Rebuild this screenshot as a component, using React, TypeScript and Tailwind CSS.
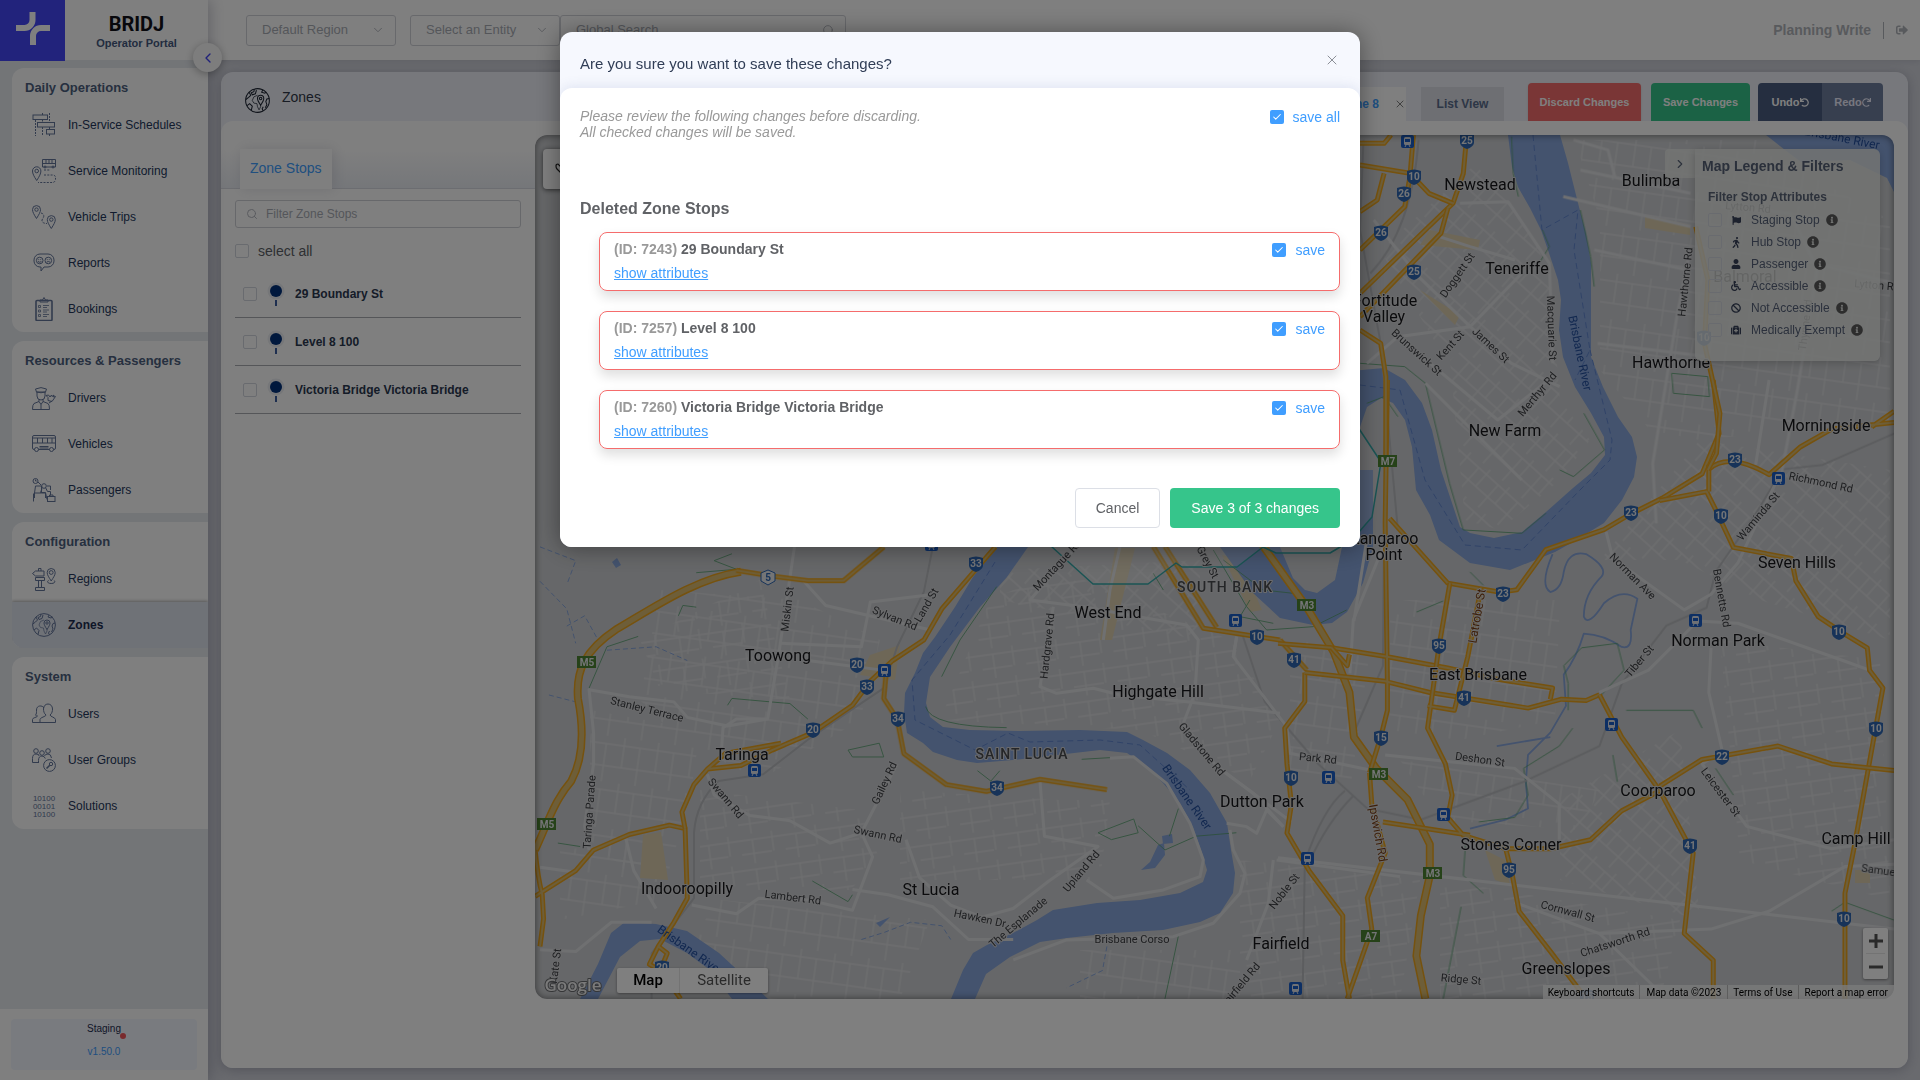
import type { ReactNode } from "react";
import { FaFlag, FaWalking, FaUser, FaWheelchair, FaBan, FaMedkit, FaInfoCircle, FaSignOutAlt, FaUndo, FaRedo } from "react-icons/fa";
import { ChevronDown, ChevronLeft, ChevronRight, Check, Search, X } from "lucide-react";

/* ---------- sidebar icons ---------- */

function Icon({ children, dark = false }: { children: ReactNode; dark?: boolean }) {
  return (
    <svg
      viewBox="0 0 24 24"
      className={dark ? "size-[25px] shrink-0 text-[#1c2433]" : "size-6 shrink-0 text-[#64769b]"}
      fill="none"
      stroke="currentColor"
      strokeWidth="1"
      aria-hidden="true"
    >
      {children}
    </svg>
  );
}

const scheduleIcon = (
  <>
    <rect x="1" y="2" width="14.5" height="4.5" />
    <rect x="5.5" y="9.5" width="17" height="4.5" />
    <rect x="14.5" y="16.5" width="8" height="4.5" />
    <path d="M3.5 7v16M10.5 0v2M10.5 6.5v3M10.5 14v9M17.5 0v9M17.5 14v2M17.5 21v3" strokeDasharray="2 1" />
  </>
);
const monitoringIcon = (
  <>
    <path d="M10.5.5h13v7.500h-13zM10.500 4.500h13M14 .5v4M17 .5v4M20 .5v4" />
    <circle cx="13" cy="8" r="1" />
    <circle cx="21" cy="8" r="1" />
    <path d="M4.700 21.500C2 17.500.5 14.500.5 12a4.200 4.200 0 0 1 8.400 0c0 2.500-1.500 5.500-4.200 9.500z" />
    <circle cx="4.700" cy="12" r="1.800" />
    <path d="M12 11h6M12 16h9a2.500 2.500 0 0 1 2.500 2.500v2a3 3 0 0 1-3 3H6" strokeDasharray="2 1.300" />
  </>
);
const tripsIcon = (
  <>
    <path d="M4.500 13.500C2 9.500.5 7 .5 4.600a4 4 0 0 1 8 0c0 2.400-1.500 4.900-4 8.900z" />
    <circle cx="4.500" cy="4.600" r="1.700" />
    <path d="M19.300 23.500c-2.500-4-4-6.500-4-8.900a4 4 0 0 1 8 0c0 2.400-1.500 4.900-4 8.900z" />
    <circle cx="19.300" cy="14.600" r="1.700" />
    <path d="M9 8c4 1 3 4 1.500 6s0 4.500 4.500 4.500" strokeDasharray="2.500 1.200" />
  </>
);
const reportsIcon = (
  <>
    <path d="M8 3h8a6 6 0 0 1 6 6v1a6 6 0 0 1-6 6h-4l-3 4v-4H8a6 6 0 0 1-6-6V9a6 6 0 0 1 6-6z" />
    <circle cx="7.700" cy="9.500" r="3.300" />
    <circle cx="16.300" cy="9.500" r="3.300" />
    <path d="M6 10.500q1.700 1.500 3.400 0M14.600 11.200q1.700-1.500 3.400 0M6.700 8.300v.8M8.700 8.300v.8M15.300 8.300v.8M17.300 8.300v.8" />
  </>
);
const bookingsIcon = (
  <>
    <rect x="4" y="3.500" width="16" height="20" rx="1" strokeWidth="1.600" />
    <path d="M8 5V3h2.500L12 .5 13.500 3H16v2z" />
    <path d="M6.500 8.500h2v2h-2zM6.500 13h2v2h-2zM6.500 17.500h2v2h-2zM11 8.500h6M11 10.500h4M11 13h6M11 15h4M11 17.500h6M11 19.500h4" strokeWidth="0.800" />
  </>
);
const driverIcon = (
  <>
    <path d="M3.500 3Q9 .2 14.500 3l-1 3h-9zM5 6v4a4 4 0 0 0 8 0V6M4.500 6Q9 7.500 13.500 6" />
    <path d="M7 13.500v2L2 17.500Q.5 18.500.5 23.500h17q0-5-1.500-6l-5-2v-2M7 15.500l2 3 2-3M9 18.500v5M17 17l3-2" />
    <path d="M14 9.500l2 2v3l4 1 3.500-5-2 .5.500-2-2 1.500-.5-1.500-1.500 2-1.500-2z" />
  </>
);
const vehiclesIcon = (
  <>
    <rect x=".5" y="3.500" width="23" height="14" rx="1.500" />
    <path d="M.5 6h23M.5 11h23M5.500 6v5M10.500 6v5M15.500 6v5M20 6v5M7.500 14.500h9M7.500 16h9" />
    <circle cx="4.500" cy="17.500" r="2" fill="#fff" />
    <circle cx="19.500" cy="17.500" r="2" fill="#fff" />
  </>
);
const passengersIcon = (
  <>
    <circle cx="3.500" cy="3" r="2.500" />
    <path d="M3.500 1.500V3h1.200M3.500 8h6v7h-7v5M3.500 8l-1 7M1.500 15.500v8M9.500 15h4v5" />
    <circle cx="12" cy="8" r="2.300" />
    <path d="M10 10.500l-1.500 4h5l1.500 7M13.500 9.500l2 4h3v4M15 8h3.500v4M6 4l3 3" />
    <rect x="15.500" y="18.500" width="7.500" height="5" />
    <path d="M17.500 18.500V17h3.500v1.500" />
  </>
);
const regionsIcon = (
  <>
    <path d="M.5 6.500l3-2.500h8.500v5H3.500zM3.500 10.500h9v3h-9zM6.500 1.500h2.500V4M6.500 1.500V4M6.500 13.500v7M9.500 13.500v7M3.500 20.500h9v3h-9z" />
    <path d="M19.200 14c-2.500-4-4-6-4-8.500a4 4 0 0 1 8 0c0 2.500-1.500 4.500-4 8.500z" />
    <circle cx="19.200" cy="5.500" r="1.900" />
    <path d="M16.500 13.500c-1.500.5-1.500 3 2.700 3s4.200-2.500 2.700-3" />
  </>
);
const zonesIcon = (
  <>
    <circle cx="12" cy="12" r="11.400" />
    <path d="M4 4l1.500 3-2 2L.8 11M9 1l-.5 2.500-2.500 1L7 6.500l3-1 1-3.500M17 2l-1 2 3 1 1.500-1M23.300 10l-2.300.5-1 2.500 1 3-1.500 3M2 17l2.500-2 2.500 2.500-1 4M17.500 22l-1-2 1-2" />
    <path d="M12 7L8.500 8.500 7 12l1.500 2.500 3 .5.500 3 1.500 3 1.500-3V16" strokeWidth="0.700" />
    <path d="M15 16.500c-2-3-3-5-3-6.500a3 3 0 0 1 6 0c0 1.500-1 3.500-3 6.500z" />
    <circle cx="15" cy="10" r="1.200" />
  </>
);
const usersIcon = (
  <>
    <path d="M8 20.500h15.500v-3c0-2-5.500-3-5.500-4.500 2-1.500 2.500-4 2.500-6 0-3-2-5-4.500-5s-4.500 2-4.500 5c0 2 .5 4.500 2.500 6 0 1.500-6 2.500-6 4.500z" />
    <path d="M8 20.500H.5v-3c0-2 4.500-2 5-3.500-1 0-2-.5-2-1 1.200-1 1-3 1-5 0-5 6-5 7.500-2" />
  </>
);
const groupsIcon = (
  <>
    <circle cx="4" cy="3" r="2.300" />
    <circle cx="10" cy="5" r="2.300" />
    <circle cx="16" cy="3" r="2.300" />
    <path d="M.5 14.500v-4Q.5 6 4 6t3 2M6.500 15v-2.500q0-4.500 3.500-4.500 2.500 0 3.300 2.500M.5 14.500h6M12.500 8Q13 6 16 6t3.500 4" />
    <circle cx="17.500" cy="17.500" r="5.900" />
    <circle cx="19" cy="16" r="1.700" />
    <path d="M17.800 17.200L14.500 20.500" strokeWidth="1.600" />
  </>
);
const solutionsIcon = (
  <g fill="currentColor" stroke="none" fontFamily="Liberation Sans" fontSize="8" textAnchor="middle">
    <text x="12" y="7">10100</text>
    <text x="12" y="15">00101</text>
    <text x="12" y="23">10100</text>
  </g>
);

const navGroups: { title: string; items: { label: string; icon: ReactNode; active?: boolean }[] }[] = [
  {
    title: "Daily Operations",
    items: [
      { label: "In-Service Schedules", icon: scheduleIcon },
      { label: "Service Monitoring", icon: monitoringIcon },
      { label: "Vehicle Trips", icon: tripsIcon },
      { label: "Reports", icon: reportsIcon },
      { label: "Bookings", icon: bookingsIcon },
    ],
  },
  {
    title: "Resources & Passengers",
    items: [
      { label: "Drivers", icon: driverIcon },
      { label: "Vehicles", icon: vehiclesIcon },
      { label: "Passengers", icon: passengersIcon },
    ],
  },
  {
    title: "Configuration",
    items: [
      { label: "Regions", icon: regionsIcon },
      { label: "Zones", icon: zonesIcon, active: true },
    ],
  },
  {
    title: "System",
    items: [
      { label: "Users", icon: usersIcon },
      { label: "User Groups", icon: groupsIcon },
      { label: "Solutions", icon: solutionsIcon },
    ],
  },
];

function Sidebar() {
  return (
    <aside className="relative z-10 flex w-52 shrink-0 flex-col bg-[#e6eaef] shadow-[2px_0_14px_rgba(60,60,90,0.3)]">
      <div className="flex h-[60px] shrink-0 bg-white">
        <div className="flex h-[61px] w-[65px] justify-center bg-[#4446f8] pt-3">
          <svg viewBox="0 0 34 33" className="h-[33px] w-[34px]" fill="none" stroke="#fff" strokeWidth="6" aria-hidden="true">
            <path d="M0 16h8.500a8 8 0 0 0 8-8V0M34 16h-9a8 8 0 0 0-8 8v9" />
          </svg>
        </div>
        <div className="flex flex-1 flex-col items-center pt-3">
          <div className="font-['Roboto'] text-xl leading-6 font-bold text-[#101018]">BRIDJ</div>
          <div className="text-[11px] leading-[14px] font-bold text-[#45597f]">Operator Portal</div>
        </div>
      </div>
      <button
        aria-label="Collapse sidebar"
        className="absolute top-[43px] -right-[14px] flex size-[29px] items-center justify-center rounded-full bg-[#fafafa] text-[#4043f5] shadow-[0_2px_8px_rgba(0,0,0,0.3)]"
      >
        <ChevronLeft size={16} />
      </button>
      <nav className="mt-2 flex flex-1 flex-col gap-[9px] pl-3">
        {navGroups.map((g) => (
          <section key={g.title} className="overflow-hidden rounded-l-xl bg-white">
            <h2 className="flex h-[34px] items-center pt-[6px] pl-[13px] text-[13px] font-bold text-[#4d6080]">{g.title}</h2>
            <ul>
              {g.items.map((it) => (
                <li key={it.label}>
                  <a
                    href="#"
                    className={
                      it.active
                        ? "flex h-[46px] items-center gap-3 bg-[#dfe4ee] pl-5 text-xs font-bold text-[#1c2d50] shadow-[0_-1px_3px_rgba(0,0,0,0.3)]"
                        : "flex h-[46px] items-center gap-3 pl-5 text-xs text-[#24375c]"
                    }
                  >
                    <Icon>{it.icon}</Icon>
                    <span>{it.label}</span>
                  </a>
                </li>
              ))}
            </ul>
          </section>
        ))}
      </nav>
      <div className="h-[71px] bg-white px-[11px] py-[10px]">
        <div className="flex h-full flex-col items-center justify-between rounded bg-[#f3f6ff] pt-1 pb-3 text-[10px]">
          <div className="relative leading-3 text-[#1c2d50]">
            Staging
            <span className="absolute -right-[5px] -bottom-[4px] size-[6px] rounded-full bg-[#f2555a]" />
          </div>
          <div className="leading-3 text-[#409eff]">v1.50.0</div>
        </div>
      </div>
    </aside>
  );
}

/* ---------- map ---------- */

const areaLabels: [string, number, number][] = [
  ["Newstead", 1480, 190], ["Teneriffe", 1517, 274], ["Bulimba", 1651, 186], ["Hawthorne", 1671, 368],
  ["New Farm", 1505, 436], ["Morningside", 1826, 431], ["Seven Hills", 1797, 568], ["Norman Park", 1718, 646],
  ["East Brisbane", 1478, 680], ["Highgate Hill", 1158, 697], ["West End", 1108, 618], ["Toowong", 778, 661],
  ["Taringa", 742, 760], ["St Lucia", 931, 895], ["Indooroopilly", 687, 894], ["Dutton Park", 1262, 807],
  ["Stones Corner", 1511, 850], ["Coorparoo", 1658, 796], ["Camp Hill", 1856, 844], ["Fairfield", 1281, 949],
  ["Greenslopes", 1566, 974], ["Fortitude", 1385, 306], ["Valley", 1384, 322], ["Kangaroo", 1384, 544],
  ["Point", 1384, 560], ["Balmoral", 1745, 282],
];

const streetLabels: [string, number, number, number][] = [
  ["Miskin St", 787, 609, -83], ["Sylvan Rd", 895, 618, 22], ["Land St", 926, 605, -60], ["Stanley Terrace", 647, 709, 14],
  ["Taringa Parade", 589, 812, -86], ["Swann Rd", 726, 798, 50], ["Swann Rd", 878, 834, 12], ["Gailey Rd", 884, 783, -65],
  ["Lambert Rd", 793, 897, 7], ["Hawken Dr", 980, 918, 12], ["The Esplanade", 1018, 922, -40], ["Upland Rd", 1081, 871, -50],
  ["Brisbane Corso", 1132, 939, 0], ["Hardgrave Rd", 1047, 646, -84], ["Montague Rd", 1057, 565, -47], ["Grey St", 1208, 562, 62],
  ["Gladstone Rd", 1202, 749, 50], ["Park Rd", 1318, 758, 6], ["Noble St", 1284, 891, -52], ["Deshon St", 1480, 759, 8],
  ["Cornwall St", 1568, 911, 15], ["Chatsworth Rd", 1615, 942, -18], ["Ridge St", 1461, 979, 5], ["Leicester St", 1721, 792, 53],
  ["Tiber St", 1639, 661, -50], ["Norman Ave", 1633, 576, 45], ["Bennetts Rd", 1722, 598, 80], ["Waminda St", 1758, 516, -50],
  ["Richmond Rd", 1821, 482, 12], ["Samuel St", 1886, 871, 8], ["Merthyr Rd", 1537, 394, -50], ["Doggett St", 1457, 275, -55],
  ["Brunswick St", 1417, 352, 42], ["Kent St", 1450, 345, -48], ["James St", 1491, 345, 43], ["Macquarie St", 1552, 328, 88],
  ["Hawthorne Rd", 1685, 282, -84], ["Lytton Rd", 1877, 285, 5], ["Lytton Rd", 1748, 207, 5], ["Kate St", 555, 966, -83],
  ["Fairfield Rd", 1240, 985, -50], ["Thynne Rd", 1805, 325, -83],
];

const shields: [string, number, number][] = [
  ["33", 976, 564], ["20", 857, 665], ["33", 867, 687], ["20", 813, 730], ["34", 898, 719], ["34", 997, 788], ["20", 662, 968],
  ["10", 1257, 637], ["41", 1294, 660], ["10", 1291, 778], ["15", 1381, 738], ["95", 1439, 646], ["41", 1464, 698],
  ["23", 1503, 594], ["23", 1631, 513], ["23", 1735, 460], ["10", 1721, 516], ["10", 1839, 632], ["10", 1876, 729],
  ["22", 1722, 757], ["41", 1690, 846], ["95", 1509, 870], ["10", 1844, 919], ["25", 1467, 141], ["10", 1414, 177],
  ["26", 1404, 194], ["26", 1381, 233], ["25", 1414, 272], ["10", 1704, 338], ["15", 1587, 997],
];

const motorways: [string, number, number][] = [
  ["M5", 587, 662], ["M5", 547, 824], ["M3", 1307, 605], ["M3", 1379, 774], ["M3", 1433, 873], ["A7", 1371, 936], ["M7", 1388, 461],
];

const stations: [number, number][] = [
  [931, 545], [884, 671], [754, 771], [1235, 621], [1328, 778], [1307, 859], [1443, 815], [1611, 725], [1695, 621],
  [1778, 479], [1295, 989], [1407, 142],
];

/* Each district uses its own local frame. */
const frames = {
  west: "translate(540 540) scale(0.4464 0.3444)",
  south: "translate(880 540) scale(0.3333)",
  north: "translate(1360 130) scale(0.3444 0.3333)",
  east: "translate(1220 380) scale(0.4464)",
};

const highways: { frame: string; d: string; wide?: boolean }[] = [
  { frame: frames.west, wide: true, d: "M450 92C350 110 250 200 170 260C100 320 80 380 85 460C100 560 95 640 70 700C30 760 15 830 -11 900" },
  { frame: frames.west, d: "M-11 900Q-5 980 5 1030L8 1100L0 1180M-11 1035L80 960L120 900L200 855L290 828L325 838L330 1040L300 1110L265 1180L245 1232L270 1250L315 1332M265 1180L285 1200L275 1232" },
  { frame: frames.west, d: "M325 838L318 790L345 710L375 665L450 655L520 610L610 560L700 480L740 410L790 350L860 290L900 200L960 110L1020 20M375 665L415 620L540 590" },
  { frame: frames.west, d: "M775 390L770 460L800 520L815 620L910 710L1000 730L1120 695L1270 725M440 88L520 105L600 118L680 118L770 20" },
  { frame: frames.south, d: "M820 20L970 265L1100 285L1200 300M855 20L1010 262M1200 300L1280 390" },
  { frame: frames.east, wide: true, d: "M95 370L195 510L255 610L290 700L300 800L350 870L420 940L470 1040L470 1110L450 1200L440 1290L460 1386" },
  { frame: frames.east, d: "M335 880L340 950L370 1060L330 1160L340 1230L285 1386M190 655L190 720L145 780L150 860L160 950L150 1015L200 1100L275 1200L275 1300L290 1386" },
  { frame: frames.east, d: "M375 0L370 320L375 680L375 740L360 800L335 880M130 590L250 600L375 620L510 645L620 670L745 690L740 715M190 655L370 675L470 700L690 735L765 715L820 718L850 705" },
  { frame: frames.east, d: "M850 705L900 800L985 920L1060 1060L1040 1240L1105 1300L1105 1386M380 310L510 455L625 475L665 470L730 380L860 335L920 300L990 265L1080 210L1118 120L1105 0" },
  { frame: frames.east, d: "M515 455L490 600L465 780L505 860L520 930L510 980L545 1020L640 1050L655 1110L670 1190L740 1280L820 1386M585 465L555 620L525 740L465 730M365 990L560 1020" },
  { frame: frames.east, d: "M1095 200Q1140 160 1230 212L1300 150L1370 110L1510 95M985 270L1090 250L1110 290L1150 375L1280 400L1290 450L1340 530L1400 570L1450 600L1455 650L1485 690L1465 800L1420 1050L1400 1150L1400 1386M1095 190V250M1460 105L1510 70" },
  { frame: frames.east, d: "M985 910L1080 850L1250 820L1370 860L1510 875M985 920L900 965L830 1030L740 1050L640 1050M250 600L285 640L290 615" },
  { frame: frames.north, d: "M975 290L1010 450L1000 640L1045 850L1035 970L1010 1020M155 15L145 140L130 230L0 360M310 15L300 130L270 220L60 430L0 490" },
  { frame: frames.north, d: "M0 40L70 40L90 15M0 105L145 130L200 190L270 220M70 130L50 210L0 245M255 235L235 310L0 560M0 600L60 640L75 740L75 1000" },
];

const avenues: { frame: string; d: string }[] = [
  { frame: frames.west, d: "M570 20L535 330L510 520L420 540L330 515L300 470L200 455L110 435L120 560L120 650L100 830L110 900M590 118L640 190L870 260M600 350L780 380M510 520L440 520L410 545L405 640" },
  { frame: frames.west, d: "M375 680L390 740L470 800L560 815L650 880L720 850L800 650M720 850L745 920L700 1075L600 1045L490 1040L440 1085L340 1060M820 870L850 980L920 1060L990 1095L1060 1070L1140 990L1250 890L1130 860L1120 700" },
  { frame: frames.west, d: "M700 1015L780 1030L880 1065L960 1160L1060 1160M0 950L80 965M0 1190L80 1195L160 1110L250 1110M190 855L210 960L260 1070M540 300L720 310L740 180L870 160" },
  { frame: frames.south, d: "M590 20L450 180L610 200L800 235L920 255L955 300L945 460L910 550L1010 680L1120 760L1210 860M520 200L480 440L530 460L640 445L720 465L920 485L1200 520M1070 290L1060 350L1220 560L1230 640L1470 690" },
  { frame: frames.south, d: "M690 655L760 650L860 730L930 850L970 960L960 1010L850 1050L700 1075L620 1020M1050 870L1060 930L1095 1000L1080 1060L1000 1150L880 1190L560 1200L400 1260M1040 850L1100 860L1130 880L1160 810L1210 860M1190 960L1560 1010M1180 960L1165 1090L1100 1260" },
  { frame: frames.south, d: "M1510 20L1420 240L1410 400M720 20L690 150L670 300M1060 350L1070 290" },
  { frame: frames.east, d: "M130 1070L1510 1230M370 840L660 870L760 950L760 1030M850 700L960 650L1070 540L1160 545L1400 630L1455 650M1100 600L1095 700L1125 830L1080 860L1180 1000L1370 1050L1510 1030M865 340L880 400L1040 515L1100 480L1160 410L1250 220M1200 190L1230 0" },
  { frame: frames.east, d: "M660 1170L850 1240L1100 1230L1230 1190L1400 1090L1510 1085M300 540L330 350M1000 1386L850 1240M0 870L160 990" },
  { frame: frames.north, d: "M40 270L170 440L320 590L440 700L560 760L580 770M290 220L430 215L550 400L560 700M230 320L320 350L450 390M20 700L110 620L320 590L470 430M190 760L470 1050M100 610L400 870L560 740" },
  { frame: frames.north, d: "M960 350L920 560L850 1000L860 1180M1050 230L1250 250L1320 400L1550 460M1330 400L1270 780L1220 1050M620 30L720 60L740 140M680 360L950 420M690 640L1010 680M640 120L960 190M590 200L960 290" },
];

const railways: { frame: string; d: string }[] = [
  { frame: frames.west, d: "M880 20L860 150L800 310L770 430L690 500L600 580L500 680L400 700Q350 760 345 850L345 1040L250 1200V1332" },
  { frame: frames.east, d: "M370 0L365 640L300 790M50 570L100 720L220 860L330 960L450 985L680 900L850 820L900 680L1000 550L1090 510L1110 430L1200 300L1260 200L1350 190L1510 120M280 920Q230 960 190 1080L185 1386M300 930Q240 990 200 1080" },
  { frame: frames.north, d: "M10 30L0 300L60 640L110 1200M170 30Q150 300 30 430" },
];

const trails: { frame: string; d: string }[] = [
  { frame: frames.west, d: "M110 430L150 310L220 280M310 220L320 190L350 195M420 480L430 460L560 475L600 520M350 95L440 85L390 60L430 40M690 610L760 590L770 630L700 630zM980 670L1010 700L1030 670M1430 1150L1400 1332M1250 850L1330 810L1340 850L1280 870zM1340 830L1400 900L1470 860L1560 850M1430 780L1410 860M610 990L690 1050L700 1030M40 880L90 890" },
  { frame: frames.south, d: "M350 140L240 300L185 410M137 500Q150 560 380 563M605 658L690 653M1000 30L1100 200L1160 270L1300 260L1400 210M1030 60L1150 150L1240 160M1110 180L1080 230L1180 250M850 150L820 100" },
  { frame: frames.east, d: "M780 740V680L770 640L810 600L890 590L905 650L850 710M910 740L1060 740L1080 780M590 460L560 430M440 520L500 495M790 780L760 820L680 870L690 930L660 980L580 990M890 900L880 840M550 1040L545 1110L590 1150M1370 1190L1400 1170L1510 1210M540 1180L500 1386M1110 870L1150 930" },
  { frame: frames.north, d: "M440 20L445 130L460 200M530 300L550 350L520 400M640 240L670 380L680 470M905 730L1010 740L1015 800L910 790zM190 760L260 1060L300 1200L470 1210L540 1150M580 1020L620 1040L710 960L650 850M0 700L130 710L190 760M20 820L70 800L110 860" },
];

const blocks: { fill: string; d: string }[] = [
  { fill: "url(#gridA)", d: "M660 590L800 600L880 640L860 720L760 780L680 740L640 700zM590 710L700 730L690 800L660 900L590 840z" },
  { fill: "url(#gridB)", d: "M700 790L860 810L880 860L850 890L700 890zM900 790L1060 800L1110 800L1100 880L900 880zM640 640L760 580L790 700L660 690z" },
  { fill: "url(#gridB)", d: "M990 600L1060 570L1230 640L1280 720L1250 780L1140 730L940 720z" },
  { fill: "url(#gridC)", d: "M1450 360L1550 280L1560 400L1590 440L1560 480L1500 530L1465 520zM1380 250L1480 160L1540 250L1550 320L1440 350z" },
  { fill: "url(#gridA)", d: "M1575 140L1760 140L1800 170L1890 220V420L1700 440L1650 430L1600 370L1600 220z" },
  { fill: "url(#gridA)", d: "M1390 600L1560 600L1555 720L1460 740L1390 730zM1400 760L1600 790L1580 830L1440 820zM1290 640L1370 650L1350 790L1290 770z" },
  { fill: "url(#gridB)", d: "M1720 640L1880 660L1890 900L1740 860zM1240 860L1420 880L1400 999L1240 999zM1440 880L1680 920L1660 999H1440z" },
  { fill: "url(#gridC)", d: "M1600 560L1700 440L1890 470V640L1760 600L1680 560zM1560 800L1680 730L1700 920L1560 880zM1000 570L1200 560L1200 640L1000 600z" },
  { fill: "url(#gridA)", d: "M560 850L660 840L660 900L560 920zM1080 950L1240 950V999H1080zM720 900L930 920L900 999H770L690 940z" },
];

function BrisbaneMap() {
  return (
    <svg
      viewBox="535 135 1359 864"
      preserveAspectRatio="xMidYMid slice"
      className="absolute inset-0 h-full w-full [&_path]:[vector-effect:non-scaling-stroke]"
      fill="none"
      strokeLinejoin="round"
      role="img"
      aria-label="Map of Brisbane"
    >
      <defs>
        <pattern id="gridA" width="34" height="46" patternUnits="userSpaceOnUse" patternTransform="rotate(8)">
          <path d="M0 8H34M8 0V30M0 30H34M24 8V46" stroke="#dcdde0" strokeWidth="1.300" />
        </pattern>
        <pattern id="gridB" width="44" height="30" patternUnits="userSpaceOnUse" patternTransform="rotate(-8)">
          <path d="M0 6H44M12 6V30M0 20H30M32 0V20" stroke="#dcdde0" strokeWidth="1.300" />
        </pattern>
        <pattern id="gridC" width="26" height="36" patternUnits="userSpaceOnUse" patternTransform="rotate(42)">
          <path d="M0 6H26M8 6V36M0 22H26M18 0V22" stroke="#dcdde0" strokeWidth="1.300" />
        </pattern>
      </defs>
      <rect x="535" y="135" width="1359" height="864" fill="#cdcfd2" />
      {blocks.map((b, i) => (
        <path key={i} d={b.d} fill={b.fill} />
      ))}
      <g fill="#dccfae">
        <path d="M643 835L661 832L668 880L640 878zM870 655L900 645L895 680L860 675zM1115 548H1135L1112 640H1100zM1222 555L1240 560L1262 610L1250 612zM1430 230L1480 240L1478 250L1420 245zM1645 215L1690 225V235L1645 228zM1420 290L1460 315L1455 325zM1485 850L1505 860L1510 885L1495 880zM1855 870H1870V883H1855z" />
      </g>

      <g fill="#88a6dc">
        <path d="M1508 135L1512 167L1518 187L1530 208L1541 230L1549 253L1558 280L1561 300L1559 330L1563 357L1575 387L1591 413L1604 437L1605 455L1591 473L1573 488L1546 512L1522 532L1494 538L1470 533L1460 527L1450 497L1441 470L1432 430L1422 403L1405 380L1384 368L1340 372V440L1360 427L1367 407L1381 398L1393 403L1405 420L1412 447L1416 490L1430 515L1439 540L1470 563L1510 570L1555 552L1573 542L1604 523L1622 500L1634 477L1637 457L1632 437L1618 417L1603 387L1591 357V263L1586 233L1579 207L1568 163L1560 135z" />
        <path d="M1340 470L1373 470V547L1363 583L1347 612L1332 623L1313 625L1280 618L1253 593L1220 547H1280L1293 578L1305 590L1317 593L1335 580L1342 547z" />
        <path d="M997 547L973 577L955 607L935 637L923 653L915 673L905 693L904 713L907 733L923 743L933 752L957 760L977 763L1013 760L1057 755L1100 750L1127 753L1147 767L1163 783L1180 803L1193 827L1202 853L1207 870L1203 882L1180 893L1140 900L1097 903L1053 910L1037 920L1013 933L987 945L973 953L963 970L951 999H975L986 974L1010 957L1040 942L1067 938L1113 933L1163 930L1200 922L1220 913L1233 893L1235 873L1231 850L1227 823L1210 793L1190 770L1167 753L1143 740L1127 732L1080 730L1020 731L970 730L943 727L930 717L926 703L930 677L950 647L980 607L1007 577L1028 547z" />
        <path d="M580 999L598 964L611 933L625 922L656 924L687 931L719 953L745 977L768 999H732L710 970L687 953L660 939L640 941L620 957L598 999z" />
        <path d="M1766 135L1785 150L1801 162L1850 160L1887 178L1894 192V135z" />
        <path d="M1158 845L1164 843L1165 855L1155 868L1141 870L1150 862zM1162 836L1172 834L1173 843L1163 844zM876 923L890 917L880 927zM612 562L617 558L621 565L616 568z" />
      </g>
      <g stroke="#88a6dc">
        <g transform={frames.east} strokeWidth="1.800">
          <path d="M745 390Q715 460 740 475Q765 470 770 430Q780 380 820 390Q870 420 855 440Q815 480 815 530Q825 555 860 500Q900 465 935 490L920 560Q925 605 900 598Q860 570 815 568Q800 620 770 660L775 730L740 790L690 840L685 900L690 960L640 985L560 1005M620 820L740 800" />
        </g>
        <g transform={frames.west} strokeWidth="1" strokeDasharray="5 3">
          <path d="M0 120L60 200L80 300M0 20L80 60L60 130M720 1160L770 1140L830 1110L900 1120L920 1160M1270 1180L1260 1250L1180 1300M150 320L260 310L330 350M20 450L80 470M60 250L100 220L130 290" />
        </g>
      </g>
      <g stroke="#6287d0" strokeWidth="1" strokeDasharray="6 4">
        <path d="M995 562L950 635L912 680L915 720L975 750L1008 733L1030 742L1100 740L1140 745L1190 790M1533 135L1542 230L1578 210L1574 250L1590 350L1575 380M1590 350L1612 440L1610 460L1580 490L1522 550L1465 545L1425 480L1400 390L1360 385" />
      </g>

      <g stroke="#57a070" strokeWidth="1" opacity="0.8">
        {trails.map((t, i) => (
          <g key={i} transform={t.frame}>
            <path d={t.d} />
          </g>
        ))}
      </g>
      <g stroke="#b8babe" strokeWidth="2">
        {railways.map((t, i) => (
          <g key={i} transform={t.frame}>
            <path d={t.d} />
          </g>
        ))}
      </g>
      <g stroke="#dfe0e3" strokeWidth="3">
        {avenues.map((t, i) => (
          <g key={i} transform={t.frame}>
            <path d={t.d} />
          </g>
        ))}
      </g>
      {highways.map((h, i) => (
        <g key={i} transform={h.frame}>
          <path d={h.d} stroke="#eca41c" strokeWidth={h.wide ? 8 : 5} />
          <path d={h.d} stroke="#dcbc70" strokeWidth={h.wide ? 5 : 2} />
        </g>
      ))}

      <path
        d="M1052 547L1093 584H1148L1176 563L1182 567H1237L1263 547L1276 553H1330L1352 540L1372 517L1381 462L1340 400L1100 400z"
        fill="#ffffff"
        fillOpacity="0.2"
        stroke="#35a9a9"
        strokeWidth="1.500"
      />

      {shields.map(([n, x, y], i) => (
        <g key={i}>
          <path d={`M${x - 7} ${y - 6}Q${x} ${y - 9} ${x + 7} ${y - 6}V${y + 2}Q${x + 6} ${y + 6} ${x} ${y + 8}Q${x - 6} ${y + 6} ${x - 7} ${y + 2}z`} fill="#2e67b3" />
          <text x={x} y={y + 3} fill="#e8eaed" fontFamily="Roboto" fontSize="10" fontWeight="700" textAnchor="middle">{n}</text>
        </g>
      ))}
      <path d="M761 573L768 570L775 573V581L768 585L761 581z" fill="#e8eaed" stroke="#2e67b3" />
      <text x="768" y="581" fill="#2e67b3" fontFamily="Roboto" fontSize="10" fontWeight="700" textAnchor="middle">5</text>
      {motorways.map(([n, x, y], i) => (
        <g key={i}>
          <rect x={x - 10} y={y - 6} width="19" height="12" fill="#4d8532" />
          <text x={x} y={y + 4} fill="#e8eaed" fontFamily="Roboto" fontSize="10" fontWeight="700" textAnchor="middle">{n}</text>
        </g>
      ))}
      {stations.map(([x, y], i) => (
        <g key={i}>
          <rect x={x - 6} y={y - 7} width="13" height="13" rx="2" fill="#1a5fc8" />
          <rect x={x - 3} y={y - 5} width="7" height="8" rx="1.500" fill="#dfe3ea" />
          <path d={`M${x - 2} ${y - 3}h5v3h-5z`} fill="#1a5fc8" />
          <path d={`M${x - 2} ${y + 5}l1-2M${x + 3} ${y + 5}l-1-2`} stroke="#dfe3ea" />
        </g>
      ))}

      <g fontFamily="Roboto" textAnchor="middle" paintOrder="stroke">
        <g fontSize="11" fill="#3c3e42" stroke="#d4d5d8" strokeWidth="2">
          {streetLabels.map(([t, x, y, r], i) => (
            <text key={i} x={x} y={y + 4} transform={`rotate(${r} ${x} ${y})`}>{t}</text>
          ))}
          <text x="1378" y="837" fill="#7a3d10" fontSize="12" transform="rotate(80 1378 833)">Ipswich Rd</text>
          <text x="1477" y="620" fill="#7a3d10" fontSize="12" transform="rotate(-80 1477 616)">Latrobe St</text>
        </g>
        <g fontSize="12" fill="#24509f">
          <text x="1580" y="357" transform="rotate(78 1580 353)">Brisbane River</text>
          <text x="1187" y="801" transform="rotate(55 1187 797)">Brisbane River</text>
          <text x="690" y="954" transform="rotate(35 690 950)">Brisbane River</text>
          <text x="1842" y="142" transform="rotate(11 1842 138)">Brisbane River</text>
        </g>
        <g fontSize="16" fill="#16171a" stroke="#d4d5d8" strokeWidth="2">
          {areaLabels.map(([t, x, y]) => (
            <text key={t} x={x} y={y}>{t}</text>
          ))}
        </g>
        <g fontSize="14" fontWeight="500" fill="#4a4c50" stroke="#d4d5d8" strokeWidth="2" letterSpacing="1">
          <text x="1225" y="592">SOUTH BANK</text>
          <text x="1022" y="759">SAINT LUCIA</text>
        </g>
        <text x="573" y="991" fontFamily="Open Sans" fontSize="17" fontWeight="600" fill="#f4f4f4" stroke="#6b6d70" strokeWidth="2">Google</text>
      </g>
    </svg>
  );
}

const legend: { label: string; icon: ReactNode }[] = [
  { label: "Staging Stop", icon: <FaFlag size={9} /> },
  { label: "Hub Stop", icon: <FaWalking size={11} /> },
  { label: "Passenger", icon: <FaUser size={10} /> },
  { label: "Accessible", icon: <FaWheelchair size={10} /> },
  { label: "Not Accessible", icon: <FaBan size={10} /> },
  { label: "Medically Exempt", icon: <FaMedkit size={10} /> },
];

const plainBox = "size-[14px] shrink-0 appearance-none rounded-[2px] border border-[#d3d6de] bg-transparent";

function MapPanel() {
  return (
    <div className="relative h-[864px] min-w-0 flex-1 overflow-hidden rounded-xl">
      <BrisbaneMap />
      <div className="pointer-events-none absolute inset-0 rounded-xl shadow-[inset_0_0_6px_1px_rgba(0,0,0,0.4)]" />

      <div className="absolute top-[14px] left-2 flex h-10 w-44 items-center rounded bg-white px-3 shadow-[0_1px_5px_rgba(0,0,0,0.6)]">
        <svg viewBox="0 0 16 16" className="size-4" fill="none" stroke="#222" strokeWidth="1.200" aria-hidden="true">
          <path d="M1 5q0-2 2-2l9 9v3h-3L2 8q-1-1-1-3z" />
        </svg>
      </div>

      <div className="absolute top-[14px] right-[14px] flex items-start">
        <button aria-label="Hide legend" className="flex h-[29px] w-[30px] items-center justify-center rounded-l bg-[#e6e9e6]/85 text-[#5a6478]">
          <ChevronRight size={14} />
        </button>
        <div className="h-[212px] w-[185px] rounded-r-md rounded-bl-md bg-[#e6e9e6]/85 pt-2 pl-[13px] shadow-[0_2px_8px_rgba(0,0,0,0.2)]">
          <h3 className="-ml-[6px] text-sm leading-[18px] font-bold text-[#566176]">Map Legend &amp; Filters</h3>
          <h4 className="mt-[14px] mb-1 text-xs leading-4 font-bold text-[#5a6477]">Filter Stop Attributes</h4>
          {legend.map((l) => (
            <label key={l.label} className="flex h-[22px] items-center text-xs text-[#566178]">
              <input type="checkbox" className={plainBox} />
              <span className="ml-[9px] flex w-[10px] justify-center text-[#38425a]">{l.icon}</span>
              <span className="mr-[6px] ml-[10px]">{l.label}</span>
              <FaInfoCircle size={12} className="text-[#5a5a5a]" />
            </label>
          ))}
        </div>
      </div>

      <div className="absolute bottom-[6px] left-[82px] flex h-[25px] rounded-[2px] bg-white font-['Roboto'] text-[15px] shadow-[0_1px_3px_rgba(0,0,0,0.4)]">
        <button className="w-[63px] border-r border-[#e6e6e6] font-medium text-black">Map</button>
        <button className="w-[88px] text-[#565656]">Satellite</button>
      </div>
      <div className="absolute right-[6px] bottom-[20px] flex w-[25px] flex-col items-center rounded-[2px] bg-white shadow-[0_1px_3px_rgba(0,0,0,0.4)]">
        <button aria-label="Zoom in" className="flex h-[25px] items-center">
          <svg viewBox="0 0 14 14" className="size-[14px]" stroke="#555" strokeWidth="3" aria-hidden="true"><path d="M7 0v14M0 7h14" /></svg>
        </button>
        <span className="h-px w-[19px] bg-[#e6e6e6]" />
        <button aria-label="Zoom out" className="flex h-[25px] items-center">
          <svg viewBox="0 0 14 14" className="size-[14px]" stroke="#555" strokeWidth="3" aria-hidden="true"><path d="M0 7h14" /></svg>
        </button>
      </div>
      <div className="absolute right-0 bottom-0 flex h-[14px] items-center bg-[#f5f5f5]/80 font-['Roboto'] text-[10px] text-black">
        <a href="#" className="border-r border-[#bbb] px-[5px]">Keyboard shortcuts</a>
        <span className="border-r border-[#bbb] px-[6px]">Map data ©2023</span>
        <a href="#" className="border-r border-[#bbb] px-[5px]">Terms of Use</a>
        <a href="#" className="px-[6px]">Report a map error</a>
      </div>
    </div>
  );
}

/* ---------- page ---------- */

function TopBar() {
  return (
    <header className="flex h-[60px] shrink-0 items-center bg-white pr-3 pl-[38px] shadow-[0_1px_6px_rgba(60,60,90,0.15)]">
      <button className="flex h-[31px] w-[150px] items-center justify-between rounded-[3px] border border-[#d0d2d8] pr-[10px] pl-[15px] text-[13px] text-[#a9adb5]">
        Default Region <ChevronDown size={14} strokeWidth={1.500} />
      </button>
      <button className="ml-[14px] flex h-[31px] w-[150px] items-center justify-between rounded-[3px] border border-[#d0d2d8] pr-[10px] pl-[15px] text-[13px] text-[#a9adb5]">
        Select an Entity <ChevronDown size={14} strokeWidth={1.500} />
      </button>
      <label className="flex h-[31px] w-[286px] items-center rounded-[3px] border border-[#d0d2d8] pr-[10px] pl-[15px]">
        <input aria-label="Global Search" placeholder="Global Search" className="min-w-0 flex-1 bg-transparent text-[13px] placeholder:text-[#a9adb5]" />
        <Search size={13} strokeWidth={1.500} className="text-[#a9adb5]" />
      </label>
      <div className="ml-auto flex items-center">
        <span className="pr-3 text-sm font-black text-[#b1b4ba]">Planning Write</span>
        <span className="h-[17px] w-px bg-[#b1b4ba]" />
        <button aria-label="Log out" className="ml-3 text-[#b1b4ba]">
          <FaSignOutAlt size={12} />
        </button>
      </div>
    </header>
  );
}

function ZoneStops() {
  const stops = ["29 Boundary St", "Level 8 100", "Victoria Bridge Victoria Bridge"];
  return (
    <section className="w-[314px] shrink-0 pt-[28px]">
      <div className="flex h-10 border-b border-[#d9dbe2] bg-linear-to-b from-white to-[#ebeef4] pl-[19px]">
        <button className="h-10 bg-white px-[10px] pb-[2px] text-sm text-[#409eff] shadow-[2px_0_12px_rgba(60,60,90,0.15)]">Zone Stops</button>
      </div>
      <div className="px-[14px] pt-[11px]">
        <label className="flex h-7 items-center gap-2 rounded-[3px] border border-[#cfd1d6] pl-[10px]">
          <Search size={12} className="text-[#b4b7bf]" />
          <input aria-label="Filter Zone Stops" placeholder="Filter Zone Stops" className="min-w-0 flex-1 bg-transparent text-xs placeholder:text-[#a9adb5]" />
        </label>
        <label className="mt-[15px] flex h-4 items-center gap-[9px] text-sm text-[#5c5f66]">
          <input type="checkbox" className={plainBox} /> select all
        </label>
        <ul className="mt-[11px]">
          {stops.map((s) => (
            <li key={s} className="border-b border-[#aaacb2]">
              <label className="flex h-[47px] items-center pl-2 text-xs font-bold text-[#2b3850]">
                <input type="checkbox" className={plainBox} />
                <svg viewBox="0 0 22 26" className="mx-2 h-[26px] w-[22px]" aria-hidden="true">
                  <circle cx="11" cy="10" r="8.500" fill="#eceef3" />
                  <circle cx="11" cy="10" r="6" fill="#00307a" />
                  <path d="M11 19v6" stroke="#3c5fa0" strokeWidth="2" />
                </svg>
                <span>{s}</span>
              </label>
            </li>
          ))}
        </ul>
      </div>
    </section>
  );
}

function CheckedBox({ label }: { label: string }) {
  return (
    <label className="flex h-4 items-center gap-[9px] text-sm leading-4 text-[#409eff]">
      <span className="relative size-[14px]">
        <input type="checkbox" defaultChecked className="block size-[14px] appearance-none rounded-[2px] bg-[#409eff]" />
        <Check size={10} strokeWidth={2.500} className="pointer-events-none absolute top-[2px] left-[2px] text-white" />
      </span>
      {label}
    </label>
  );
}

const deleted = [
  { id: 7243, name: "29 Boundary St" },
  { id: 7257, name: "Level 8 100" },
  { id: 7260, name: "Victoria Bridge Victoria Bridge" },
];

function SaveDialog() {
  return (
    <div className="fixed inset-0 z-20 flex items-start justify-center bg-black/50 pt-8">
      <div
        role="dialog"
        aria-modal="true"
        aria-labelledby="dialog-title"
        className="w-[800px] max-w-full overflow-hidden rounded-xl bg-[#f6f8fe] shadow-[0_1px_24px_rgba(0,0,0,0.4)]"
      >
        <div className="flex h-14 items-center justify-between px-5">
          <h2 id="dialog-title" className="pt-[7px] text-[15px] leading-5 text-[#303d56]">Are you sure you want to save these changes?</h2>
          <button aria-label="Close" className="text-[#8b8f97]">
            <X size={16} strokeWidth={1.500} />
          </button>
        </div>
        <div className="rounded-t-xl bg-white px-5 pt-5 pb-[19px] shadow-[0_-2px_12px_rgba(80,100,160,0.13)]">
          <div className="flex items-start justify-between">
            <p className="text-sm leading-4 text-[#999] italic">
              Please review the following changes before discarding.
              <br />
              All checked changes will be saved.
            </p>
            <div className="pt-px">
              <CheckedBox label="save all" />
            </div>
          </div>
          <h3 className="mt-[59px] text-base leading-5 font-bold text-[#606266]">Deleted Zone Stops</h3>
          <ul className="mt-[13px] flex flex-col gap-5 pl-[19px]">
            {deleted.map((d) => (
              <li key={d.id} className="flex h-[59px] items-start justify-between rounded-lg border border-[#f56c6c] px-[14px] pt-2 shadow-[0_6px_12px_rgba(0,0,0,0.13)]">
                <div>
                  <p className="text-sm leading-4 font-bold text-[#606266]">
                    <span className="text-[#999]">(ID: {d.id})</span> {d.name}
                  </p>
                  <button className="mt-2 block text-sm leading-4 text-[#409eff] underline">show attributes</button>
                </div>
                <div className="pt-px">
                  <CheckedBox label="save" />
                </div>
              </li>
            ))}
          </ul>
          <div className="mt-[39px] flex justify-end gap-[10px] text-sm">
            <button className="h-10 rounded border border-[#dcdfe6] px-5 text-[#606266]">Cancel</button>
            <button className="h-10 rounded bg-[#36c58b] px-[21px] text-white">Save 3 of 3 changes</button>
          </div>
        </div>
      </div>
    </div>
  );
}

export default function App() {
  return (
    <div className="flex min-h-screen bg-[#d3d5dd] font-['Liberation_Sans',sans-serif]">
      <Sidebar />
      <div className="flex min-w-0 flex-1 flex-col">
        <TopBar />
        <main className="flex flex-1 flex-col px-3 pt-3 pb-3 pl-[13px]">
          <div className="flex flex-1 flex-col rounded-xl bg-[#eff1f8] shadow-[0_2px_12px_rgba(60,60,90,0.3)]">
            <div className="flex h-[49px] items-end pr-[25px] pl-6 text-xs font-bold">
              <div className="flex h-full items-center gap-3 text-sm font-normal text-[#303848]">
                <span className="pt-2">
                  <Icon dark>{zonesIcon}</Icon>
                </span>
                <h1>Zones</h1>
              </div>
              <div className="ml-auto flex h-[34px] w-36 items-center justify-end bg-white text-[#409eff]">
                Zone 8
                <button aria-label="Close tab" className="ml-[15px] text-[#555]">
                  <X size={12} strokeWidth={1.500} />
                </button>
              </div>
              <button className="ml-[15px] h-[34px] w-[83px] bg-[#dcdfe6] text-[#5a6c8c]">List View</button>
              <button className="ml-6 h-[38px] w-[113px] rounded-t bg-[#f56c6c] text-[11px] text-white shadow">Discard Changes</button>
              <button className="ml-[10px] h-[38px] w-[99px] rounded-t bg-[#36c58b] text-[11px] text-white">Save Changes</button>
              <button className="ml-2 flex h-[38px] w-16 items-center justify-center rounded-tl bg-[#4a5c80] text-[11px] text-white">
                Undo <FaUndo size={9} />
              </button>
              <button className="flex h-[38px] w-[61px] items-center justify-center rounded-tr bg-[#6e7f9e] text-[11px] text-[#eef]">
                Redo <FaRedo size={9} />
              </button>
            </div>
            <div className="flex flex-1 items-start rounded-xl bg-white pr-[14px]">
              <ZoneStops />
              <div className="flex min-w-0 flex-1 pt-[14px]">
                <MapPanel />
              </div>
            </div>
          </div>
        </main>
      </div>
      <SaveDialog />
    </div>
  );
}
